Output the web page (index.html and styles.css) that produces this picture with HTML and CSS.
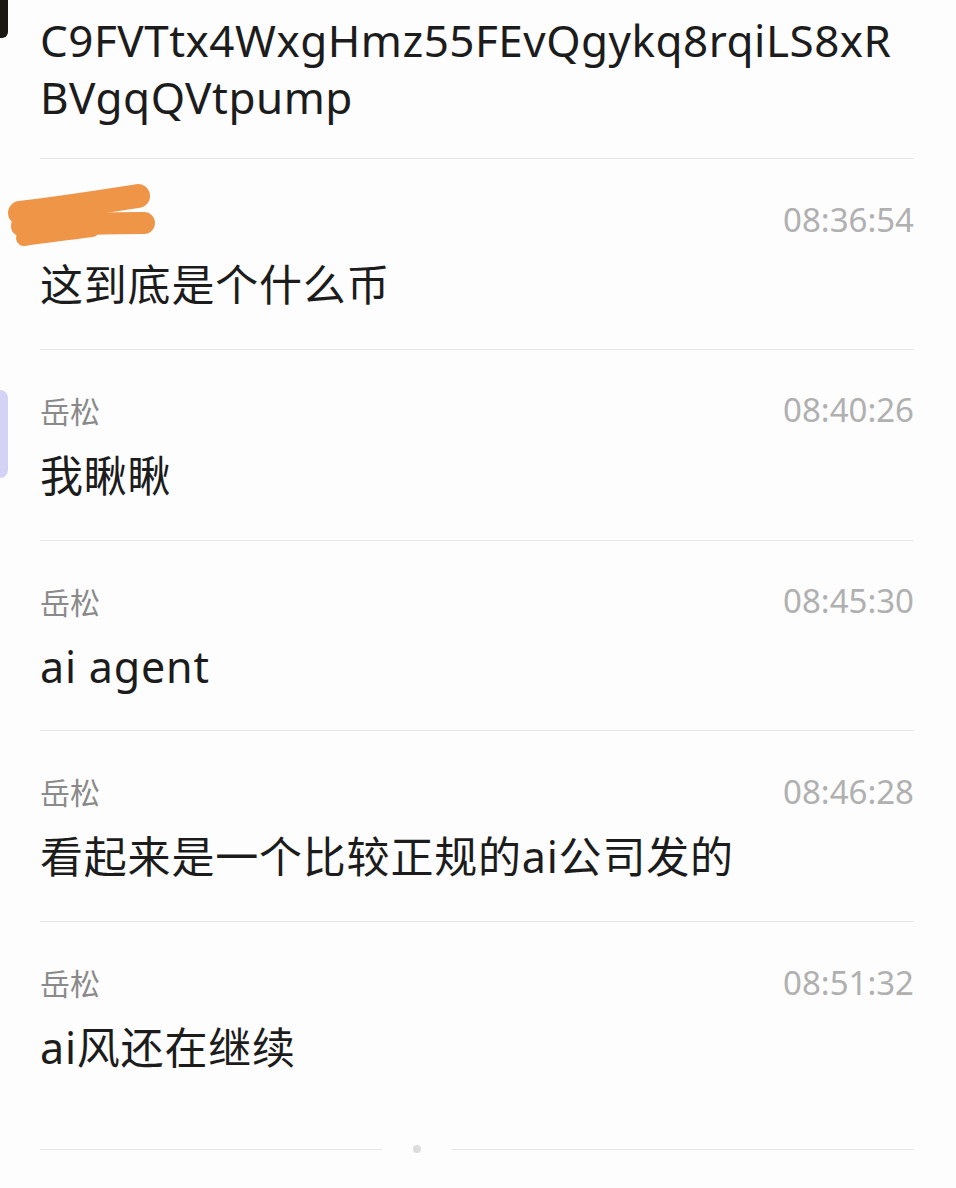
FILE: index.html
```html
<!DOCTYPE html>
<html lang="zh-CN">
<head>
<meta charset="utf-8">
<link rel="stylesheet" href="styles.css">
</head>
<body>
<div class="edge-top"></div>
<div class="edge-mid"></div>
<div class="page">
  <div class="head">C9FVTtx4WxgHmz55FEvQgykq8rqiLS8xR<br>BVgqQVtpump</div>
  <div class="row">
    <div class="meta">
      <span class="name scribble-wrap">
        <svg class="scribble" width="170" height="80" viewBox="0 0 170 80">
          <path d="M20 33 C60 28 100 22 138 16" stroke="#ef9548" stroke-width="24" stroke-linecap="round" fill="none"/>
          <path d="M22 46 C70 44 110 43 144 43" stroke="#ef9548" stroke-width="22" stroke-linecap="round" fill="none"/>
          <path d="M24 58 C50 54 70 52 92 49" stroke="#ef9548" stroke-width="16" stroke-linecap="round" fill="none"/>
        </svg>
      </span>
      <span class="time">08:36:54</span>
    </div>
    <div class="msg">这到底是个什么币</div>
  </div>
  <div class="row">
    <div class="meta"><span class="name">岳松</span><span class="time">08:40:26</span></div>
    <div class="msg">我瞅瞅</div>
  </div>
  <div class="row">
    <div class="meta"><span class="name">岳松</span><span class="time">08:45:30</span></div>
    <div class="msg">ai agent</div>
  </div>
  <div class="row">
    <div class="meta"><span class="name">岳松</span><span class="time">08:46:28</span></div>
    <div class="msg">看起来是一个比较正规的ai公司发的</div>
  </div>
  <div class="row last">
    <div class="meta"><span class="name">岳松</span><span class="time">08:51:32</span></div>
    <div class="msg">ai风还在继续</div>
  </div>
  <div class="foot">
    <span class="line left"></span><span class="dot"></span><span class="line"></span>
  </div>
</div>
</body>
</html>
```

FILE: styles.css
```css
html, body {
  margin: 0;
  padding: 0;
  background: #fdfdfd;
}
body {
  font-family: "Noto Sans", "Noto Sans CJK SC", sans-serif;
  color: #1c1c1c;
  position: relative;
  width: 956px;
  height: 1188px;
  overflow: hidden;
}
.edge-top {
  position: absolute;
  left: -10px;
  top: -10px;
  width: 18px;
  height: 48px;
  border-radius: 6px;
  background: #1a1612;
}
.edge-mid {
  position: absolute;
  left: -10px;
  top: 390px;
  width: 18px;
  height: 88px;
  border-radius: 8px;
  background: #d4d3f6;
}
.page {
  margin: 0 42px 0 40px;
}
.head {
  padding-top: 12px;
  font-size: 44px;
  line-height: 57px;
  letter-spacing: 0.5px;
  padding-bottom: 32px;
  border-bottom: 1px solid #e8e8e8;
  color: #1c1c1c;
}
.row {
  height: 190.75px;
  box-sizing: border-box;
  padding-top: 40px;
  border-bottom: 1px solid #e8e8e8;
}
.row.last {
  height: 227px;
  border-bottom: none;
}
.meta {
  display: flex;
  justify-content: space-between;
  align-items: center;
  height: 40px;
}
.name {
  font-size: 30px;
  color: #8a8a8a;
}
.scribble-wrap {
  position: relative;
  display: block;
  width: 1px;
  height: 40px;
}
.scribble {
  position: absolute;
  left: -40px;
  top: -19px;
}
.time {
  font-size: 33px;
  color: #b0b0b0;
}
.msg {
  margin-top: 18px;
  font-size: 43px;
  line-height: 56px;
  letter-spacing: 0.8px;
  color: #1c1c1c;
}
.msg-latin {
  letter-spacing: 0;
}
.foot {
  display: flex;
  align-items: center;
  height: 2px;
  margin-top: -1px;
}
.line {
  flex: 1;
  height: 1px;
  background: #e8e8e8;
}
.line.left {
  flex: none;
  width: 342px;
}
.dot {
  width: 8px;
  height: 8px;
  border-radius: 50%;
  background: #dcdcdc;
  margin: 0 31px;
  flex: none;
}
```
